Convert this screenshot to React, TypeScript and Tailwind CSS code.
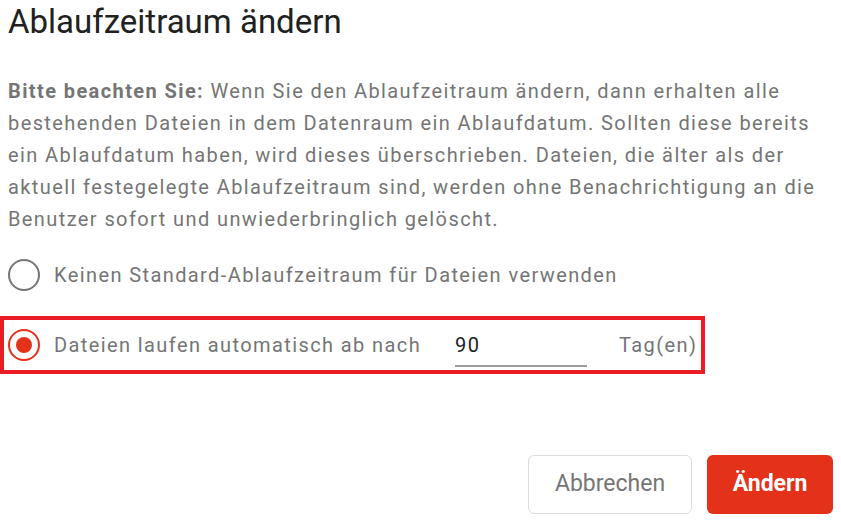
import React from "react";

export default function App() {
  return (
    <div
      className="w-[841px] h-[522px] bg-white overflow-hidden"
      style={{ fontFamily: "Roboto, 'Liberation Sans', sans-serif" }}
    >
      <div className="px-2 flex flex-col h-full">
        <h1 className="text-[33px] leading-[44px] text-[#212121] font-normal mt-0">
          Ablaufzeitraum ändern
        </h1>
        <p className="mt-[31px] text-[20px] leading-[32px] tracking-[1.4px] text-[#757575] w-[810px]">
          <span className="font-bold">Bitte beachten Sie:</span> Wenn Sie den
          Ablaufzeitraum ändern, dann erhalten alle bestehenden Dateien in dem
          Datenraum ein Ablaufdatum. Sollten diese bereits ein Ablaufdatum haben,
          wird dieses überschrieben. Dateien, die älter als der aktuell
          festegelegte Ablaufzeitraum sind, werden ohne Benachrichtigung an die
          Benutzer sofort und unwiederbringlich gelöscht.
        </p>
        <div className="mt-[22px] flex items-center h-[36px] gap-[14px]">
          <span className="w-[32px] h-[32px] rounded-full border-[2.5px] border-[#757575] shrink-0" />
          <span className="text-[20px] tracking-[1.4px] text-[#757575]">
            Keinen Standard-Ablaufzeitraum für Dateien verwenden
          </span>
        </div>
        <div className="-ml-2 mt-[23px] w-[705px] h-[58px] border-4 border-[#ec1c24] flex items-center pl-[4px]">
          <span className="w-[32px] h-[32px] rounded-full border-[2.5px] border-[#e3311a] shrink-0 flex items-center justify-center">
            <span className="w-[16px] h-[16px] rounded-full bg-[#e3311a]" />
          </span>
          <span className="ml-[14px] text-[20px] tracking-[1.4px] text-[#757575]">
            Dateien laufen automatisch ab nach
          </span>
          <div className="ml-[34px] w-[132px] h-[44px] border-b-2 border-[#9e9e9e] flex items-center pt-[2px]">
            <span className="text-[20px] tracking-[1.4px] text-[#212121]">90</span>
          </div>
          <span className="ml-[32px] text-[20px] tracking-[1.4px] text-[#757575]">Tag(en)</span>
        </div>
        <div className="mt-auto mb-[8px] flex justify-end gap-[15px]">
          <button className="w-[164px] h-[59px] rounded-[6px] border border-[#dddddd] bg-white text-[23px] text-[#757575]">
            Abbrechen
          </button>
          <button className="w-[126px] h-[59px] rounded-[6px] bg-[#e3311a] text-[23px] font-bold text-white">
            Ändern
          </button>
        </div>
      </div>
    </div>
  );
}
